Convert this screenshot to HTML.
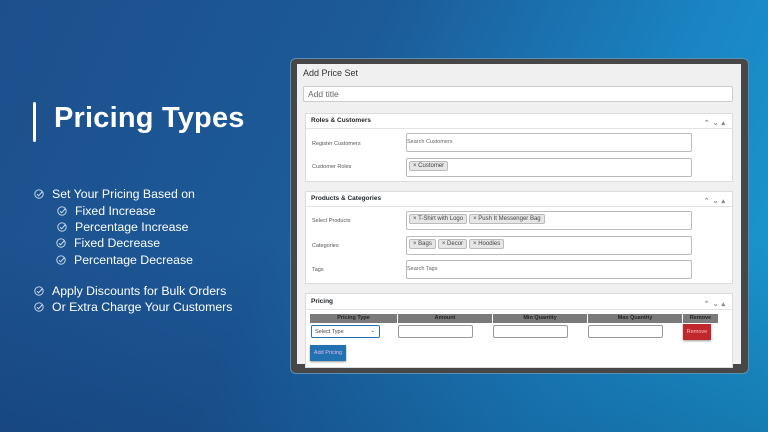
<!DOCTYPE html>
<html><head><meta charset="utf-8"><style>
*{margin:0;padding:0;box-sizing:border-box}
body{width:768px;height:432px;overflow:hidden;position:relative;font-family:"Liberation Sans",sans-serif;
background:linear-gradient(115deg,#1d4f8c 0%,#1c5a98 40%,#1a86c4 75%,#1a9bd2 100%);}
.shade{position:absolute;inset:0;background:linear-gradient(180deg,rgba(0,0,0,0) 55%,rgba(10,30,80,.25) 100%)}
.bar{position:absolute;left:33px;top:102px;width:3px;height:40px;background:#fff;border-radius:2px}
h1{position:absolute;left:54px;top:102px;font-size:29px;color:#fff;font-weight:bold;letter-spacing:.2px}
.li{position:absolute;color:#fff;font-size:12.3px;white-space:nowrap}
.li svg{position:absolute;left:-18px;top:2px}
.frame{position:absolute;left:290px;top:58px;width:459px;height:316px;background:#474747;border-radius:6px;border:1px solid #5a8fb5}
.in{position:absolute;left:297px;top:64px;width:444px;height:300px;background:#f0f0f1;overflow:hidden}
.a{position:absolute}
.box{position:absolute;left:305px;width:428px;background:#fff;border:1px solid #dcdcde}
.hd{position:absolute;left:0;top:0;right:0;border-bottom:1px solid #e2e2e2;font-size:6.5px;font-weight:bold;color:#1d2327;padding-left:5px}
.lbl{position:absolute;font-size:5.5px;color:#555}
.inp{position:absolute;left:100px;width:286px;height:19px;border:1px solid #bbb;border-radius:2px;background:#fff;font-size:5.5px;color:#666}
.tag{display:inline-block;background:#e6e6e6;border:1px solid #bbb;border-radius:2px;font-size:6px;color:#444;padding:0 3px;margin:2px 0 0 2px;line-height:8px}
.arr{position:absolute;right:4px;top:3px;font-size:7px;color:#888;letter-spacing:3px}
.th{position:absolute;top:314px;height:9px;background:#7a7a7a;color:#222;font-size:5.5px;font-weight:bold;text-align:center;line-height:9px}
.ti{position:absolute;top:325px;height:13px;border:1px solid #999;border-radius:2px;background:#fff}
</style></head><body>
<div class="shade"></div>
<div class="bar"></div>
<h1>Pricing Types</h1>
<svg width="0" height="0" style="position:absolute"><defs><g id="ck"><circle cx="5" cy="5" r="4.2" fill="none" stroke="#cfe0f0" stroke-width="0.9"/><path d="M3 5.2l1.6 1.6L8.5 2.5" fill="none" stroke="#cfe0f0" stroke-width="1"/></g></defs></svg>
<div class="li" style="left:52px;top:187px"><svg width="10" height="10"><use href="#ck"/></svg>Set Your Pricing Based on</div>
<div class="li" style="left:75px;top:204px"><svg width="10" height="10"><use href="#ck"/></svg>Fixed Increase</div>
<div class="li" style="left:75px;top:220px"><svg width="10" height="10"><use href="#ck"/></svg>Percentage Increase</div>
<div class="li" style="left:74px;top:236px"><svg width="10" height="10"><use href="#ck"/></svg>Fixed Decrease</div>
<div class="li" style="left:74px;top:253px"><svg width="10" height="10"><use href="#ck"/></svg>Percentage Decrease</div>
<div class="li" style="left:52px;top:284px"><svg width="10" height="10"><use href="#ck"/></svg>Apply Discounts for Bulk Orders</div>
<div class="li" style="left:52px;top:300px"><svg width="10" height="10"><use href="#ck"/></svg>Or Extra Charge Your Customers</div>

<div class="frame"></div>
<div class="in"></div>
<div class="a" style="left:303px;top:68px;font-size:9px;color:#333">Add Price Set</div>
<div class="a" style="left:303px;top:86px;width:430px;height:16px;background:#fff;border:1px solid #ccc;border-radius:2px;font-size:8.5px;color:#666;padding:2px 0 0 4px">Add title</div>

<div class="box" style="top:113px;height:69px">
 <div class="hd" style="height:15px;line-height:14px">Roles &amp; Customers<span class="arr">⌃⌄▴</span></div>
 <div class="lbl" style="left:6px;top:27px">Register Customers</div>
 <div class="inp" style="top:19px;line-height:16px">Search Customers</div>
 <div class="lbl" style="left:6px;top:50px">Customer Roles</div>
 <div class="inp" style="top:44px"><span class="tag">× Customer</span></div>
</div>

<div class="box" style="top:191px;height:93px">
 <div class="hd" style="height:15px;line-height:14px">Products &amp; Categories<span class="arr">⌃⌄▴</span></div>
 <div class="lbl" style="left:6px;top:26px">Select Products</div>
 <div class="inp" style="top:19px"><span class="tag">× T-Shirt with Logo</span><span class="tag">× Push It Messenger Bag</span></div>
 <div class="lbl" style="left:6px;top:51px">Categories</div>
 <div class="inp" style="top:44px"><span class="tag">× Bags</span><span class="tag">× Decor</span><span class="tag">× Hoodies</span></div>
 <div class="lbl" style="left:6px;top:75px">Tags</div>
 <div class="inp" style="top:68px;line-height:16px">Search Tags</div>
</div>

<div class="box" style="top:293px;height:75px">
 <div class="hd" style="height:16px;line-height:15px">Pricing<span class="arr">⌃⌄▴</span></div>
</div>
<div class="th" style="left:310px;width:87px">Pricing Type</div>
<div class="th" style="left:398px;width:94px">Amount</div>
<div class="th" style="left:493px;width:94px">Min Quantity</div>
<div class="th" style="left:588px;width:94px">Max Quantity</div>
<div class="th" style="left:683px;width:35px">Remove</div>
<div class="ti" style="left:311px;width:69px;border-color:#2271b1;font-size:5.5px;color:#444;padding:3px 0 0 3px">Select Type<span style="position:absolute;right:4px;top:2px">⌄</span></div>
<div class="ti" style="left:398px;width:75px"></div>
<div class="ti" style="left:493px;width:75px"></div>
<div class="ti" style="left:588px;width:75px"></div>
<div class="a" style="left:683px;top:324px;width:28px;height:16px;background:#c0282e;color:#fbb;font-size:5.5px;text-align:center;line-height:16px;box-shadow:0 1px 2px rgba(0,0,0,.4)">Remove</div>
<div class="a" style="left:310px;top:345px;width:36px;height:16px;background:#2271b1;color:#dbe;font-size:5.5px;text-align:center;line-height:16px;box-shadow:0 1px 2px rgba(0,0,0,.4)">Add Pricing</div>
</body></html>
